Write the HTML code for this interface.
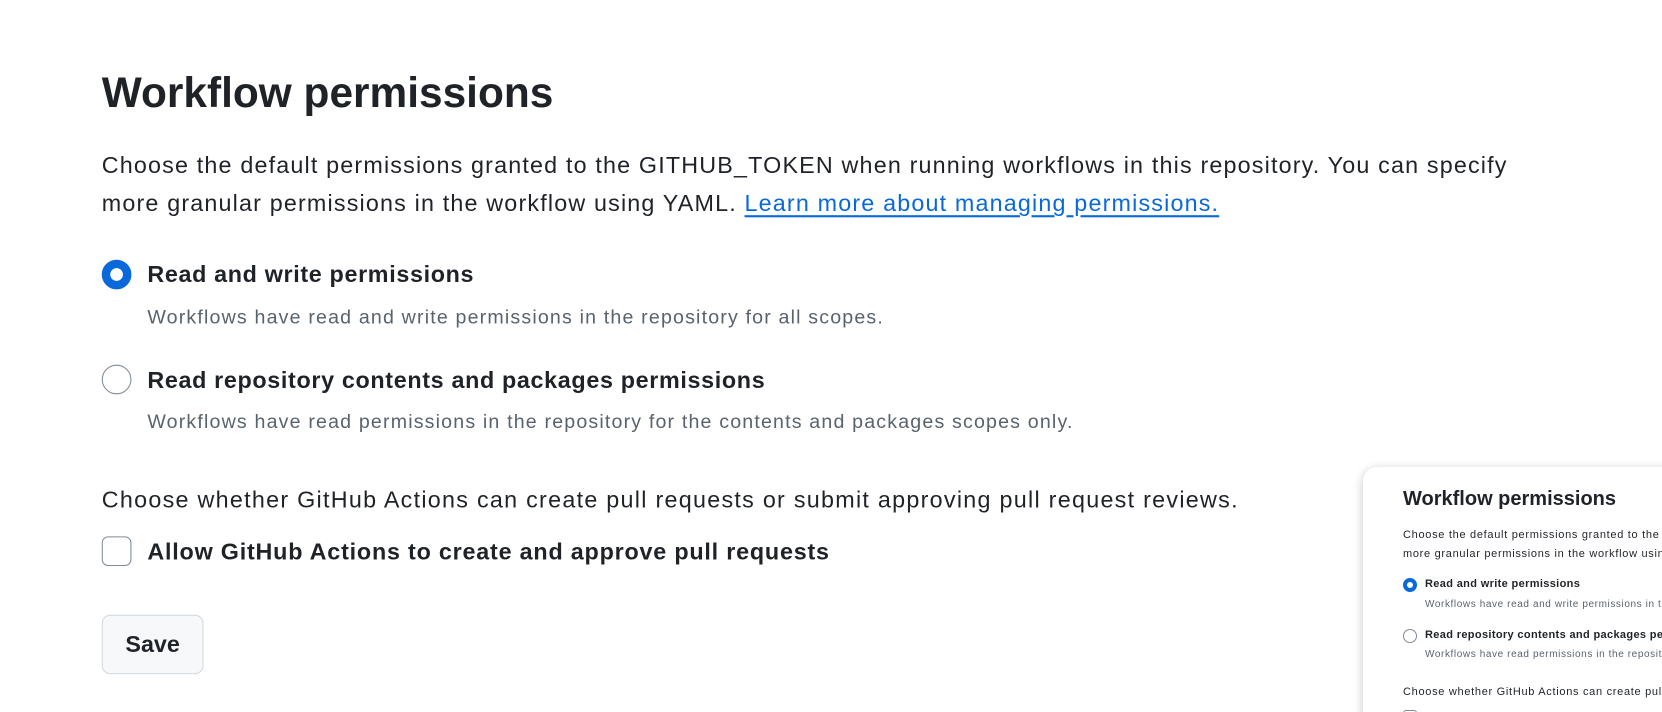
<!DOCTYPE html>
<html><head><style>
body{margin:0;width:1662px;height:712px;background:#fff;font-family:"Liberation Sans",sans-serif;color:#1f2328;position:relative;overflow:hidden}
.wrap{position:absolute;left:0;top:0;width:1500px;height:640px;transform:scale(1.06);transform-origin:0 0}
.a{position:absolute;white-space:nowrap}
h1{position:absolute;left:96px;top:66px;margin:0;font-size:40px;font-weight:600}
.p{font-size:22px;line-height:36px;letter-spacing:1.1px}
.lbl{font-size:22px;font-weight:bold;letter-spacing:0.62px}
.desc{font-size:18.5px;color:#59636e;letter-spacing:1.1px}
a{color:#0969da;text-decoration:underline;text-underline-offset:4px}
.radio{position:absolute;width:28px;height:28px;border-radius:50%;box-sizing:border-box}
.btn{position:absolute;left:96px;top:580px;width:96px;height:56px;border:1px solid #d1d9e0;border-radius:8px;background:#f6f8fa;box-sizing:border-box;font-size:22px;font-weight:bold;text-align:center;line-height:54px}
.clip{position:absolute;left:1340px;top:440px;width:322px;height:272px;overflow:hidden}
.card{position:absolute;left:23px;top:27px;width:420px;height:300px;border-radius:14px;background:#fff;box-shadow:0 2px 10px rgba(0,0,0,.22)}
.cb{font-size:11px;letter-spacing:0.7px}
.cl{font-size:11px;font-weight:bold;letter-spacing:0.35px}
.cd{font-size:10px;color:#59636e;letter-spacing:0.6px}
</style></head><body>
<div class="wrap">
<h1>Workflow permissions</h1>
<div class="a p" style="left:96px;top:138px">Choose the default permissions granted to the GITHUB_TOKEN when running workflows in this repository. You can specify<br>more granular permissions in the workflow using YAML. <a>Learn more about managing permissions.</a></div>
<div class="radio" style="left:96px;top:245px;border:8.5px solid #0969da"></div>
<div class="a lbl" style="left:139px;top:246px">Read and write permissions</div>
<div class="a desc" style="left:139px;top:288px">Workflows have read and write permissions in the repository for all scopes.</div>
<div class="radio" style="left:96px;top:344px;border:1px solid #818b98"></div>
<div class="a lbl" style="left:139px;top:346px">Read repository contents and packages permissions</div>
<div class="a desc" style="left:139px;top:387px">Workflows have read permissions in the repository for the contents and packages scopes only.</div>
<div class="a p" style="left:96px;top:454px;letter-spacing:1.2px">Choose whether GitHub Actions can create pull requests or submit approving pull request reviews.</div>
<div style="position:absolute;left:96px;top:506px;width:28px;height:28px;border:1px solid #818b98;border-radius:6px;box-sizing:border-box"></div>
<div class="a lbl" style="left:139px;top:508px;letter-spacing:0.75px">Allow GitHub Actions to create and approve pull requests</div>
<div class="btn">Save</div>
</div>
<div class="clip"><div class="card">
<div class="a" style="left:40px;top:21px;font-size:20px;font-weight:600">Workflow permissions</div>
<div class="a cb" style="left:40px;top:59px;line-height:19px">Choose the default permissions granted to the GITHUB_TOKEN<br>more granular permissions in the workflow using YAML.</div>
<div class="radio" style="left:40px;top:111px;width:14px;height:14px;border:4px solid #0969da"></div>
<div class="a cl" style="left:62px;top:111px">Read and write permissions</div>
<div class="a cd" style="left:62px;top:132px">Workflows have read and write permissions in the repository</div>
<div class="radio" style="left:40px;top:162px;width:14px;height:14px;border:1px solid #818b98"></div>
<div class="a cl" style="left:62px;top:162px">Read repository contents and packages permissions</div>
<div class="a cd" style="left:62px;top:182px">Workflows have read permissions in the repository for the</div>
<div class="a cb" style="left:40px;top:219px">Choose whether GitHub Actions can create pull requests</div>
<div style="position:absolute;left:40px;top:243px;width:14px;height:14px;border:1px solid #818b98;border-radius:3px;box-sizing:border-box"></div>
</div></div>
</body></html>
